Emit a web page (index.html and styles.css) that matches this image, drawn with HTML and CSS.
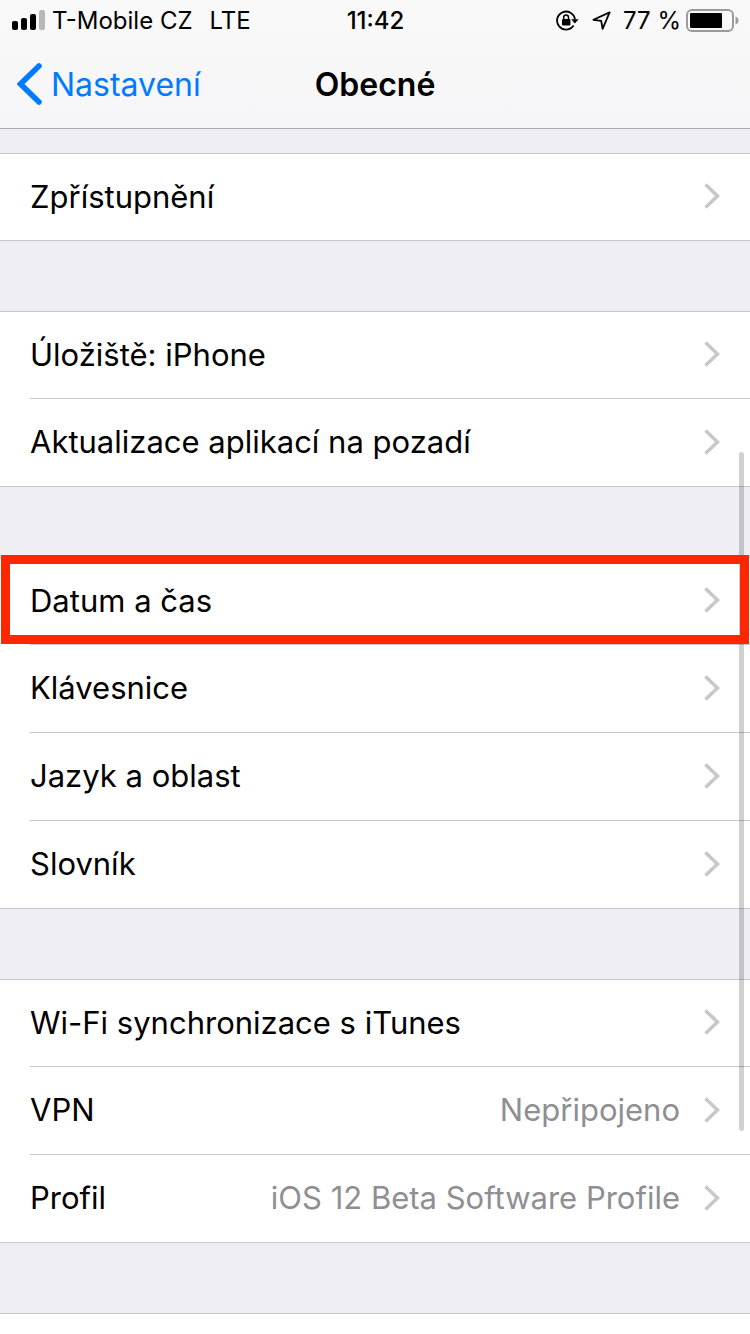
FILE: index.html
```html
<!DOCTYPE html>
<html lang="cs">
<head>
    <meta charset="UTF-8">
    <meta name="viewport" content="width=device-width, initial-scale=1.0">
    <title>Obecné</title>
    <link rel="stylesheet" href="styles.css">
</head>
<body>
    <!-- chevron shared by all rows -->
    <svg class="defs" width="0" height="0" aria-hidden="true">
        <symbol id="chevron" viewBox="0 0 16 26">
            <path d="M1.5 1.5 13.5 13 1.5 24.5" fill="none" stroke="currentColor" stroke-width="3.6"/>
        </symbol>
    </svg>

    <header class="header">
        <div class="status">
            <div class="status-left">
                <svg class="signal" width="33" height="20" viewBox="0 0 33 20" aria-hidden="true">
                    <rect x="0" y="11" width="6" height="9" rx="2"/>
                    <rect x="9" y="8" width="6" height="12" rx="2"/>
                    <rect x="18" y="4" width="6" height="16" rx="2"/>
                    <rect x="27" y="0" width="6" height="20" rx="2" fill="#b8b8b9"/>
                </svg>
                <span class="carrier">T-Mobile CZ</span>
                <span>LTE</span>
            </div>
            <div class="time">11:42</div>
            <div class="status-right">
                <svg class="lock" width="23" height="21" viewBox="0 0 23 21" aria-hidden="true">
                    <path d="M17.6 15.5A9 9 0 1 1 19 9.5" fill="none" stroke="#000" stroke-width="1.8"/>
                    <path d="M15.2 9.2h7.4l-3.7 4.4z"/>
                    <rect x="6" y="9" width="8.4" height="6.4" rx="1"/>
                    <path d="M7.7 9.5V7.4a2.4 2.4 0 0 1 4.8 0v2.1" fill="none" stroke="#000" stroke-width="1.5"/>
                </svg>
                <svg class="location" width="19" height="19" viewBox="0 0 19 19" aria-hidden="true">
                    <path d="M17.6 1.4 1.400 8.800l7.800 1 1.400 8z" fill="none" stroke="#000" stroke-width="1.8" stroke-linejoin="round"/>
                </svg>
                <span class="percent">77 %</span>
                <svg width="53" height="23" viewBox="0 0 53 23" aria-hidden="true">
                    <rect x="1" y="1" width="46" height="21" rx="5" fill="none" stroke="#9b9b9b" stroke-width="2"/>
                    <rect x="4" y="4" width="32" height="15" rx="1"/>
                    <path d="M49.5 7.5c4 1.2 4 6.800 0 8z" fill="#9b9b9b"/>
                </svg>
            </div>
        </div>
        <nav class="nav">
            <a class="back" href="#">
                <svg width="25" height="42" viewBox="0 0 25 42" aria-hidden="true">
                    <path d="M22 3 3.500 21 22 39" fill="none" stroke="currentColor" stroke-width="5.500" stroke-linecap="round" stroke-linejoin="miter"/>
                </svg>
                Nastavení
            </a>
            <h1 class="title">Obecné</h1>
        </nav>
    </header>

    <main class="list">
        <div class="group">
            <a class="row" href="#"><span class="label">Zpřístupnění</span><svg class="chevron"><use href="#chevron"/></svg></a>
        </div>

        <div class="group">
            <a class="row" href="#"><span class="label">Úložiště: iPhone</span><svg class="chevron"><use href="#chevron"/></svg></a>
            <a class="row" href="#"><span class="label">Aktualizace aplikací na pozadí</span><svg class="chevron"><use href="#chevron"/></svg></a>
        </div>

        <div class="group">
            <a class="row marked" href="#"><span class="label">Datum a čas</span><svg class="chevron"><use href="#chevron"/></svg></a>
            <a class="row" href="#"><span class="label">Klávesnice</span><svg class="chevron"><use href="#chevron"/></svg></a>
            <a class="row" href="#"><span class="label">Jazyk a oblast</span><svg class="chevron"><use href="#chevron"/></svg></a>
            <a class="row" href="#"><span class="label">Slovník</span><svg class="chevron"><use href="#chevron"/></svg></a>
        </div>

        <div class="group">
            <a class="row" href="#"><span class="label">Wi-Fi synchronizace s iTunes</span><svg class="chevron"><use href="#chevron"/></svg></a>
            <a class="row" href="#"><span class="label">VPN</span><span class="value">Nepřipojeno</span><svg class="chevron"><use href="#chevron"/></svg></a>
            <a class="row" href="#"><span class="label">Profil</span><span class="value">iOS 12 Beta Software Profile</span><svg class="chevron"><use href="#chevron"/></svg></a>
        </div>

        <div class="group rest"></div>
    </main>

    <div class="scrollbar"></div>
</body>
</html>
```
FILE: styles.css
```css
*{
    box-sizing: border-box;
}
body{
    display: flex;
    flex-direction: column;
    min-height: 100vh;
    margin: 0;
    background: #efeef4;
    color: #000;
    font-family: Inter, "Liberation Sans", sans-serif;
    font-size: 31px;
}
a{
    color: inherit;
    text-decoration: none;
}
svg{
    flex: none;
}
.defs{
    position: absolute;
}

/* header */
.header{
    background: linear-gradient(#f9f9f9, #f6f6f8);
    border-bottom: 1px solid #a8a7ad;
}
.status{
    display: grid;
    grid-template-columns: 1fr auto 1fr;
    align-items: center;
    height: 40px;
    padding: 0 11px 0 12px;
    font-size: 24px;
}
.status-left,
.status-right{
    display: flex;
    align-items: center;
}
.status-right{
    justify-content: flex-end;
}
.carrier{
    margin: 0 17px 0 7px;
}
.time{
    font-weight: 500;
}
.location{
    margin: 0 12px 0 13px;
}
.percent{
    margin-right: 5px;
}
.nav{
    display: grid;
    grid-template-columns: 1fr auto 1fr;
    align-items: center;
    height: 88px;
    padding: 0 17px;
    font-size: 32px;
}
.back{
    display: flex;
    align-items: center;
    gap: 9px;
    color: #007aff;
}
.title{
    margin: 0;
    font-size: 32px;
    font-weight: 600;
}

/* settings list */
.list{
    display: flex;
    flex: 1;
    flex-direction: column;
    gap: 70px;
    padding-top: 24px;
}
.group{
    background: #fff;
    border-top: 1px solid #c8c7cc;
    border-bottom: 1px solid #c8c7cc;
}
.rest{
    flex: 1;
    min-height: 20px;
    border-bottom: 0;
}
.row{
    position: relative;
    display: flex;
    align-items: center;
    height: 88px;
    margin-left: 30px;
    padding: 0 30px 2px 0;
    border-bottom: 1px solid #c8c7cc;
}
.row:first-child{
    height: 87px;
}
.row:last-child{
    height: 87px;
    border-bottom: 0;
}
.row:only-child{
    height: 86px;
}
.label{
    flex: 1;
}
.value{
    margin-right: 24px;
    color: #8e8e93;
}
.chevron{
    width: 16px;
    height: 26px;
    color: #c7c7cc;
}

/* red frame round the row, drawn above the scrollbar */
.marked::after{
    content: "";
    position: absolute;
    z-index: 2;
    top: -3px;
    right: 1px;
    bottom: 0;
    left: -29px;
    border: 9px solid #ff2600;
}
.scrollbar{
    position: fixed;
    z-index: 1;
    top: 452px;
    right: 6px;
    width: 5px;
    height: 679px;
    border-radius: 3px;
    background: rgba(0, 0, 0, .18);
}
```
